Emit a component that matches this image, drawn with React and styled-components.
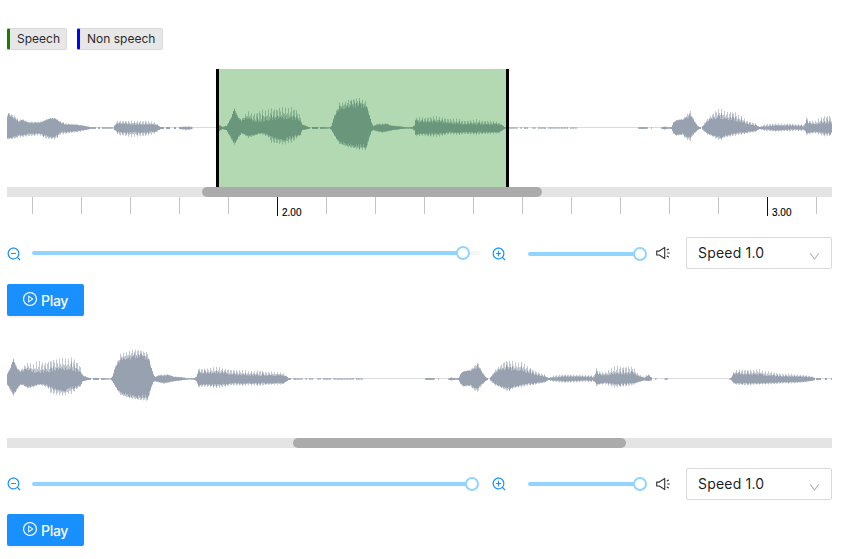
import React from "react";
import styled, { createGlobalStyle } from "styled-components";
import {
  AiOutlineZoomIn,
  AiOutlineZoomOut,
  AiOutlinePlayCircle,
  AiOutlineSound,
  AiOutlineDown,
} from "react-icons/ai";

const GlobalStyle = createGlobalStyle`
  * { box-sizing: border-box; }
  body {
    margin: 0;
    background: #fff;
    color: rgba(0, 0, 0, 0.9);
    font-family: Inter, "Liberation Sans", sans-serif;
    font-size: 14px;
    overflow: hidden;
  }
`;

const Page = styled.main`
  width: 841px;
  height: 559px;
  padding: 28px 9px 0 7px;
`;

const Labels = styled.div`
  display: flex;
  gap: 10px;
  height: 22px;
  margin-bottom: 19px;
`;

const Label = styled.span`
  width: ${(p) => p.$width}px;
  padding-left: 7px;
  border: 1px solid #d9d9d9;
  border-left: 3px solid ${(p) => p.$color};
  border-radius: 2px;
  background: #e7e7e7;
  color: #2b2b2b;
  font-size: 12px;
  line-height: 20px;
  white-space: nowrap;
`;

const WaveArea = styled.div`
  position: relative;
  height: 118px;
`;

const WaveSvg = styled.svg`
  display: block;
`;

const Region = styled.div`
  position: absolute;
  top: 0;
  left: 209px;
  width: 293px;
  height: 118px;
  border: solid #000;
  border-width: 0 3px;
  background: rgba(0, 128, 0, 0.3);
  background-clip: padding-box;
`;

const ScrollTrack = styled.div`
  height: 10px;
  padding-left: ${(p) => p.$start}px;
  background: #e4e4e4;
`;

const ScrollThumb = styled.div`
  width: ${(p) => p.$width}px;
  height: 10px;
  border-radius: 5px;
  background: #ababab;
`;

const Timeline = styled.div`
  display: flex;
  height: 40px;
  padding-left: 25px;
  overflow: hidden;
`;

const Tick = styled.div`
  flex: 0 0 49px;
  height: ${(p) => (p.$major ? 19 : 17)}px;
  padding: 10px 0 0 4px;
  border-left: 1px solid ${(p) => (p.$major ? "#111" : "#c4c4c4")};
  color: #000;
  font: 10px/12px "Liberation Sans", sans-serif;
  -webkit-text-stroke: 0.15px #000;
`;

const Controls = styled.div`
  display: flex;
  height: 32px;
  align-items: center;
  margin-bottom: ${(p) => p.$after}px;
`;

const IconSlot = styled.span`
  display: flex;
  flex: none;
  width: 14px;
  justify-content: center;
  margin-top: ${(p) => p.$drop * 2}px;
  margin-right: ${(p) => p.$gap}px;
  color: ${(p) => p.$color};

  svg {
    flex: none;
  }
`;

const Track = styled.div`
  display: flex;
  flex: none;
  align-items: center;
  width: ${(p) => p.$width}px;
  height: 4px;
  margin-top: ${(p) => p.$drop * 2}px;
  margin-right: ${(p) => p.$gap}px;
  border-radius: 2px;
  background: #f5f5f5;
`;

const Fill = styled.div`
  flex: none;
  width: ${(p) => p.$width}px;
  height: 4px;
  border-radius: 2px;
  background: #91d5ff;
`;

const Handle = styled.div`
  flex: none;
  width: 14px;
  height: 14px;
  margin-left: -7px;
  border: 2px solid #91d5ff;
  border-radius: 50%;
  background: #fff;
`;

const Select = styled.div`
  display: flex;
  align-items: center;
  justify-content: space-between;
  width: 146px;
  height: 32px;
  padding: 0 10px 2px 11px;
  border: 1px solid #d9d9d9;
  border-radius: 2px;
  letter-spacing: 0.2px;

  svg {
    margin-top: 9px;
    color: rgba(0, 0, 0, 0.3);
  }
`;

const PlayButton = styled.button`
  display: flex;
  align-items: center;
  gap: 3px;
  width: 77px;
  height: 32px;
  padding: 0 0 0 15px;
  border: 0;
  border-radius: 2px;
  background: #1890ff;
  box-shadow: 0 2px 0 rgba(0, 0, 0, 0.045);
  color: #fff;
  font: 500 14px Inter, sans-serif;
  letter-spacing: -0.3px;

  svg {
    margin-top: -2px;
  }
`;

const Player = styled.section`
  margin-bottom: 4px;
`;

const ScrollGap = styled.div`
  height: 20px;
`;

// Envelope samples: position, solid rise, peak rise, solid fall, peak fall.
const ENVELOPE = [
  [7, 12, 15, 10, 12], [8, 13, 16, 10, 12], [15, 8, 13, 9, 11], [18, 6, 9, 7, 10],
  [22, 8, 9, 7, 10], [28, 5, 7, 6, 9], [40, 5, 7, 5, 8], [44, 7, 8, 7, 11],
  [50, 10, 10, 9, 12], [55, 9, 10, 8, 12], [60, 5, 7, 4, 7], [65, 3, 5, 4, 6],
  [75, 3, 4, 3, 5], [83, 2, 3, 2, 3], [90, 0.8, 0.9, 0.8, 0.9], [113, 0.3, 0.8, 0.3, 0.8],
  [116, 4, 7, 3, 5], [119, 4, 8, 4, 8], [130, 3, 8, 4, 10], [145, 3, 8, 4, 9],
  [155, 3, 6, 3, 6], [160, 1, 1, 1, 1.5], [178, 0.8, 1, 0.8, 1], [185, 1, 2, 1, 3],
  [190, 1, 2, 1, 2], [193, 0, 0, 0, 0], [216, 0, 0, 0, 0], [219, 3, 3, 3, 3],
  [222, 1, 1, 1, 1], [226, 2, 2, 2, 2], [228, 5, 5, 5, 6], [231, 11, 11, 11, 12],
  [234, 19, 20, 16, 17], [238, 10, 11, 9, 10], [241, 7, 9, 5, 6], [244, 8, 14, 6, 7],
  [248, 9, 17, 8, 10], [252, 6, 16, 7, 9], [260, 5, 19, 5, 6], [268, 7, 20, 6, 10],
  [270, 6, 22, 7, 16], [276, 8, 22, 10, 17], [284, 8, 24, 11, 18], [292, 8, 22, 8, 15],
  [297, 7, 19, 7, 10], [300, 6, 14, 6, 8], [302, 3, 4, 2, 2], [308, 1, 1, 0.8, 1],
  [320, 0.8, 1, 0.8, 1], [329, 0.2, 0.4, 0.2, 0.4], [331, 2, 2, 2, 2], [334, 12, 13, 7, 8],
  [339, 18, 26, 15, 16], [346, 21, 28, 17, 19], [352, 22, 30, 18, 20], [360, 22, 30, 18, 22],
  [366, 20, 28, 18, 23], [368, 15, 17, 12, 14], [371, 5, 6, 3, 4], [373, 2, 2, 2, 2],
  [377, 3, 5, 3, 4], [382, 3, 5, 4, 5], [386, 4, 5, 3, 4], [391, 2, 3, 2, 3],
  [400, 1.2, 2, 1, 1], [405, 0.4, 1, 0.2, 1], [411, 0.4, 1, 0.2, 1], [414, 2, 3, 2, 3],
  [415, 7, 11, 6, 9], [420, 5, 11, 5, 8], [430, 5, 12, 5, 9], [440, 5, 12, 5, 9],
  [448, 4, 11, 4, 7], [460, 3, 9, 4, 7], [478, 3, 9, 4, 7], [488, 3, 8, 4, 6],
  [498, 3, 7, 4, 6], [501, 3, 4, 3, 3], [504, 1, 1, 0.8, 1], [509, 0.3, 0.9, 0.3, 0.9],
  [575, 0.1, 0.9, 0.1, 0.9], [581, 0, 0, 0, 0], [637, 0, 0, 0, 0], [639, 0.8, 1, 0.8, 1],
  [646, 0.8, 1, 0.8, 1], [648, 0, 0, 0, 0], [650, 0, 0, 0, 0], [652, 0.8, 1, 0.8, 1],
  [654, 0, 0, 0, 0], [660, 0, 0, 0, 0], [663, 1, 2, 1, 2], [669, 0.4, 1, 0.4, 1],
  [671, 1, 1, 1, 1], [673, 5, 6, 5, 6], [676, 8, 8, 7, 8], [682, 8, 9, 6, 7],
  [686, 10, 14, 9, 12], [690, 13, 18, 10, 14], [692, 9, 12, 6, 9], [695, 5, 6, 4, 5],
  [698, 1, 2, 1, 2], [701, 0.6, 0.6, 0.6, 0.6], [703, 2, 4, 2, 3], [707, 7, 10, 5, 7],
  [711, 9, 14, 7, 8], [717, 9, 21, 9, 12], [720, 9, 20, 9, 13], [724, 8, 19, 8, 10],
  [735, 7, 17, 5, 8], [745, 4, 9, 4, 6], [755, 2, 5, 3, 4], [759, 1, 1, 1, 1],
  [765, 1, 5, 1, 4], [775, 2, 5, 2, 4], [790, 2, 5, 1, 4], [804, 1, 4, 1, 3],
  [806, 7, 12, 5, 8], [808, 4, 8, 5, 6], [815, 3, 8, 3, 6], [824, 4, 14, 5, 9],
  [832, 4, 13, 4, 8], [842, 5, 14, 4, 7], [846, 3, 7, 3, 4], [853, 1, 2, 1, 2],
  [857, 3, 6, 2, 2], [861, 1, 1, 1, 1], [866, 0, 0, 0, 0], [872, 0, 0, 0, 0],
  [875, 0.8, 1, 0.8, 1], [877, 0, 0, 0, 0], [935, 0, 0, 0, 0], [938, 0.5, 1, 0.5, 1],
  [941, 5, 8, 4, 5], [945, 4, 10, 4, 6], [955, 4, 10, 4, 7], [964, 4, 11, 4, 6],
  [972, 3, 9, 4, 6], [987, 2, 6, 3, 5], [1006, 2, 5, 3, 4], [1018, 1.5, 3, 1.5, 2],
  [1021, 0.8, 1, 0.8, 1], [1040, 0.8, 1, 0.8, 1],
];

const sampleAt = (x) => {
  const next = ENVELOPE.findIndex((point) => point[0] > x);
  if (next < 1) return ENVELOPE[0];
  const a = ENVELOPE[next - 1];
  const b = ENVELOPE[next];
  const mix = (x - a[0]) / (b[0] - a[0]);
  return a.map((value, i) => value + (b[i] - value) * mix);
};

const ripple = (x, seed) => {
  const n = Math.sin((Math.floor(x) + seed) * 127.1) * 43758.5453;
  return n - Math.floor(n);
};

// Each pitch period spans a little under three columns; groups of periods
// swell and fade together.
const buildWave = (offset, scale) => {
  let core = "";
  let fringe = "";
  for (let i = 0; i < 825; i += 1) {
    const x = offset + i / scale;
    const [, up, peakUp, down, peakDown] = sampleAt(x);
    const pulse = 0.5 + 0.5 * Math.cos((x * Math.PI * 2) / 2.85);
    const swell = 0.35 + 0.65 * ripple(x / 5.7, 4);
    const bodyUp = 0.05 + 0.75 * pulse * swell * ripple(x, 11);
    const bodyDown = 0.05 + 0.85 * pulse * swell * ripple(x, 23);
    const rise = up * (up > 2 ? 0.88 + 0.18 * ripple(x, 3) : 1) + (peakUp - up) * bodyUp;
    const fall = down * (down > 2 ? 0.84 + 0.2 * ripple(x, 8) : 1) + (peakDown - down) * bodyDown;
    const quiet = peakUp < 1.05 && ripple(x / 2, 6) < 0.3 ? 0 : 1;
    core += `M${i} ${59 - rise * quiet}h1V${59 + fall * quiet}h-1z`;
    const tip = 0.25 + 0.75 * pulse * (0.55 + 0.45 * swell);
    const top = Math.max(rise, up + (peakUp - up) * tip);
    const bottom = Math.max(fall, down + (peakDown - down) * tip);
    fringe += `M${i} ${59 - top * quiet}h1V${59 + bottom * quiet}h-1z`;
  }
  return { core, fringe };
};

const FIRST_WAVE = buildWave(7, 1);
const SECOND_WAVE = buildWave(228.1, 1.019);

function Waveform({ wave }) {
  return (
    <WaveSvg width="825" height="118" viewBox="0 0 825 118" aria-hidden="true">
      <rect y="58" width="825" height="1" fill="#d9dbdf" />
      <path d={wave.fringe} fill="#98a1b0" opacity="0.6" />
      <path d={wave.core} fill="#98a1b0" />
    </WaveSvg>
  );
}

function Slider({ width, value, gap, drop }) {
  return (
    <Track $width={width} $gap={gap} $drop={drop}>
      <Fill $width={value} />
      <Handle />
    </Track>
  );
}

function PlayerControls({ zoom, drop, after }) {
  return (
    <>
      <Controls $after={after}>
        <IconSlot $color="#1890ff" $gap={11} $drop={drop}>
          <AiOutlineZoomOut size={16} />
        </IconSlot>
        <Slider width={448} value={zoom} gap={12} drop={0} />
        <IconSlot $color="#1890ff" $gap={22} $drop={drop}>
          <AiOutlineZoomIn size={16} />
        </IconSlot>
        <Slider width={112} value={112} gap={16} drop={drop} />
        <IconSlot $color="#333" $gap={16} $drop={0}>
          <AiOutlineSound size={16} />
        </IconSlot>
        <Select>
          Speed 1.0
          <AiOutlineDown size={13} />
        </Select>
      </Controls>
      <PlayButton>
        <AiOutlinePlayCircle size={16} />
        Play
      </PlayButton>
    </>
  );
}

const TICKS = Array.from({ length: 17 }, (_, i) =>
  i === 5 ? "2.00" : i === 15 ? "3.00" : ""
);

export default function App() {
  return (
    <Page>
      <GlobalStyle />
      <Labels>
        <Label $color="#138000" $width={60}>Speech</Label>
        <Label $color="#0000ff" $width={86}>Non speech</Label>
      </Labels>
      <Player>
        <WaveArea>
          <Waveform wave={FIRST_WAVE} />
          <Region />
        </WaveArea>
        <ScrollTrack $start={195}>
          <ScrollThumb $width={340} />
        </ScrollTrack>
        <Timeline>
          {TICKS.map((label, i) => (
            <Tick key={i} $major={label !== ""}>{label}</Tick>
          ))}
        </Timeline>
        <PlayerControls zoom={431} drop={1} after={15} />
      </Player>
      <Player>
        <WaveArea>
          <Waveform wave={SECOND_WAVE} />
        </WaveArea>
        <ScrollTrack $start={286}>
          <ScrollThumb $width={333} />
        </ScrollTrack>
        <ScrollGap />
        <PlayerControls zoom={440} drop={0} after={14} />
      </Player>
    </Page>
  );
}
